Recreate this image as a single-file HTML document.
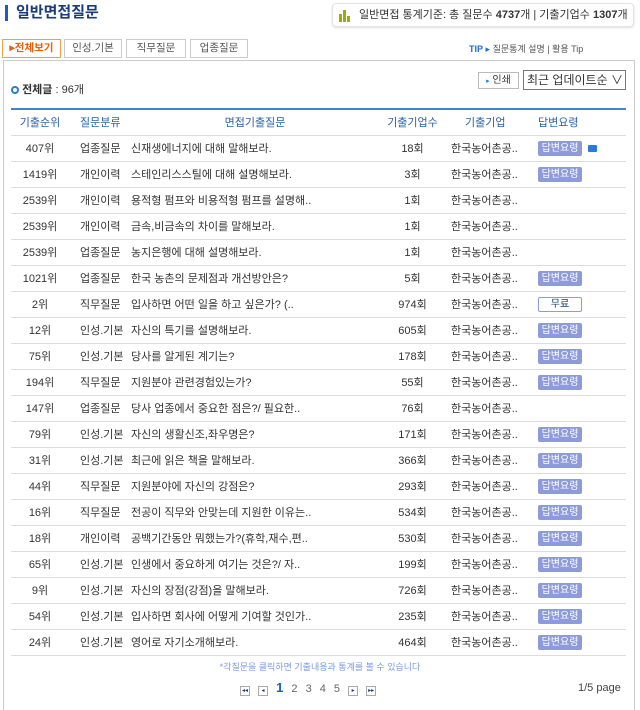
<!DOCTYPE html>
<html><head><meta charset="utf-8"><style>
*{margin:0;padding:0;box-sizing:border-box}
body{width:640px;height:707px;background:#fff;font-family:"Liberation Sans","Noto Sans CJK KR",sans-serif;font-size:11px;color:#333;position:relative;overflow:hidden}
.abs{position:absolute}
.title{left:5px;top:5px;font-size:15px;font-weight:bold;color:#1a3d7a;padding-left:8px;border-left:3px solid #1a5fb4;line-height:16px}
.stats{left:332px;top:3px;width:302px;height:24px;border:1px solid #e3e3e3;border-radius:4px;box-shadow:0 1px 2px #ddd;font-size:11px;line-height:22px;padding-left:26px;color:#333}
.bars{left:6px;top:6px}
.tab{top:39px;height:19px;border:1px solid #ccc;font-size:10.5px;line-height:17px;text-align:center;color:#555;background:#fff}
.box{left:3px;top:60px;width:632px;height:650px;border:1px solid #ccc;border-bottom:none}
table{position:absolute;left:11px;top:108px;width:615px;border-collapse:collapse;border-top:2px solid #3f86d0;table-layout:fixed}
td,th{height:26px;border-bottom:1px solid #ddd;font-weight:normal;white-space:nowrap;overflow:hidden}
th{color:#2a62a8;height:26px;background:#fff}
.b{display:inline-block;width:44px;height:15px;background:#8e9bdb;color:#fff;font-size:10px;line-height:15px;text-align:center;border-radius:2px;vertical-align:middle}
.f{display:inline-block;width:44px;height:15px;border:1px solid #8e9bdb;color:#1a3d7a;font-size:10px;line-height:13px;text-align:center;border-radius:2px;vertical-align:middle}
</style></head><body>
<div class="abs title">일반면접질문</div>
<div class="abs stats"><svg class="abs bars" width="12" height="12"><rect x="0" y="4" width="3" height="8" fill="#9aaa10"/><rect x="4" y="0" width="3" height="12" fill="#9aaa10"/><rect x="8" y="6" width="3" height="6" fill="#9aaa10"/></svg>일반면접 통계기준: 총 질문수 <b>4737</b>개 | 기출기업수 <b>1307</b>개</div>
<div class="abs tab" style="left:2px;width:59px;border-color:#f0a040;color:#e8600a;font-weight:bold">▸전체보기</div>
<div class="abs tab" style="left:64px;width:58px">인성.기본</div>
<div class="abs tab" style="left:126px;width:60px">직무질문</div>
<div class="abs tab" style="left:190px;width:58px">업종질문</div>
<div class="abs" style="left:469px;top:42px;font-size:9px;color:#555"><b style="color:#1a6fd0">TIP</b> <span style="color:#1a6fd0">▸</span> 질문통계 설명 | 활용 Tip</div>
<div class="abs box"></div>
<div class="abs" style="left:11px;top:81px;font-size:11px"><span style="display:inline-block;width:8px;height:8px;border:2px solid #2a7ad8;border-radius:50%;vertical-align:-1px"></span> <b>전체글</b> : 96개</div>
<div class="abs" style="left:478px;top:72px;width:41px;height:17px;border:1px solid #bbb;font-size:10px;line-height:15px;text-align:center"><span style="color:#2a7ad8;font-size:7px">▸</span> 인쇄</div>
<div class="abs" style="left:523px;top:70px;width:103px;height:20px;border:1px solid #777;font-size:12px;line-height:18px;padding-left:3px">최근 업데이트순 ∨</div>
<table>
<colgroup><col style="width:58px"><col style="width:61px"><col style="width:250px"><col style="width:65px"><col style="width:85px"><col style="width:96px"></colgroup>
<tr><th>기출순위</th><th style="text-align:left;padding-left:11px">질문분류</th><th>면접기출질문</th><th>기출기업수</th><th style="text-align:left;padding-left:20px">기출기업</th><th style="text-align:left;padding-left:8px">답변요령</th></tr>
<tbody id="tb"></tbody>
</table>
<div class="abs" style="left:0;width:640px;top:660px;text-align:center;font-size:9px;color:#7a9be0">*각질문을 클릭하면 기출내용과 통계를 볼 수 있습니다</div>
<div class="abs" style="left:240px;top:680px;font-size:11px;color:#666;word-spacing:5px"><span style="display:inline-block;width:10px;height:10px;border:1px solid #aaa;font-size:6px;line-height:8px;text-align:center;color:#1a3d7a">◂◂</span> <span style="display:inline-block;width:10px;height:10px;border:1px solid #aaa;font-size:6px;line-height:8px;text-align:center;color:#1a3d7a">◂</span> <b style="color:#1a5fb4;font-size:13px">1</b> 2 3 4 5 <span style="display:inline-block;width:10px;height:10px;border:1px solid #aaa;font-size:6px;line-height:8px;text-align:center;color:#1a3d7a">▸</span> <span style="display:inline-block;width:10px;height:10px;border:1px solid #aaa;font-size:6px;line-height:8px;text-align:center;color:#1a3d7a">▸▸</span></div>
<div class="abs" style="left:578px;top:682px;font-size:11px;color:#444">1/5 page</div>
<script>
var r=[["407위","업종질문","신재생에너지에 대해 말해보라.","18회",1],["1419위","개인이력","스테인리스스틸에 대해 설명해보라.","3회",1],["2539위","개인이력","용적형 펌프와 비용적형 펌프를 설명해..","1회",0],["2539위","개인이력","금속,비금속의 차이를 말해보라.","1회",0],["2539위","업종질문","농지은행에 대해 설명해보라.","1회",0],["1021위","업종질문","한국 농촌의 문제점과 개선방안은?","5회",1],["2위","직무질문","입사하면 어떤 일을 하고 싶은가? (..","974회",2],["12위","인성.기본","자신의 특기를 설명해보라.","605회",1],["75위","인성.기본","당사를 알게된 계기는?","178회",1],["194위","직무질문","지원분야 관련경험있는가?","55회",1],["147위","업종질문","당사 업종에서 중요한 점은?/ 필요한..","76회",0],["79위","인성.기본","자신의 생활신조,좌우명은?","171회",1],["31위","인성.기본","최근에 읽은 책을 말해보라.","366회",1],["44위","직무질문","지원분야에 자신의 강점은?","293회",1],["16위","직무질문","전공이 직무와 안맞는데 지원한 이유는..","534회",1],["18위","개인이력","공백기간동안 뭐했는가?(휴학,재수,편..","530회",1],["65위","인성.기본","인생에서 중요하게 여기는 것은?/ 자..","199회",1],["9위","인성.기본","자신의 장점(강점)을 말해보라.","726회",1],["54위","인성.기본","입사하면 회사에 어떻게 기여할 것인가..","235회",1],["24위","인성.기본","영어로 자기소개해보라.","464회",1]];
var h="";r.forEach(function(x,i){h+='<tr><td style="text-align:center">'+x[0]+'</td><td style="padding-left:11px">'+x[1]+'</td><td style="padding-left:1px">'+x[2]+'</td><td style="text-align:center">'+x[3]+'</td><td style="padding-left:6px">한국농어촌공..</td><td style="padding-left:8px">'+(x[4]==1?'<span class="b">답변요령</span>':x[4]==2?'<span class="f">무료</span>':'')+(i==0?'<span style="display:inline-block;width:9px;height:7px;background:#2a7ad8;border-radius:1px;margin-left:6px;vertical-align:middle"></span>':'')+'</td></tr>'});
document.getElementById("tb").innerHTML=h;
</script>
</body></html>
